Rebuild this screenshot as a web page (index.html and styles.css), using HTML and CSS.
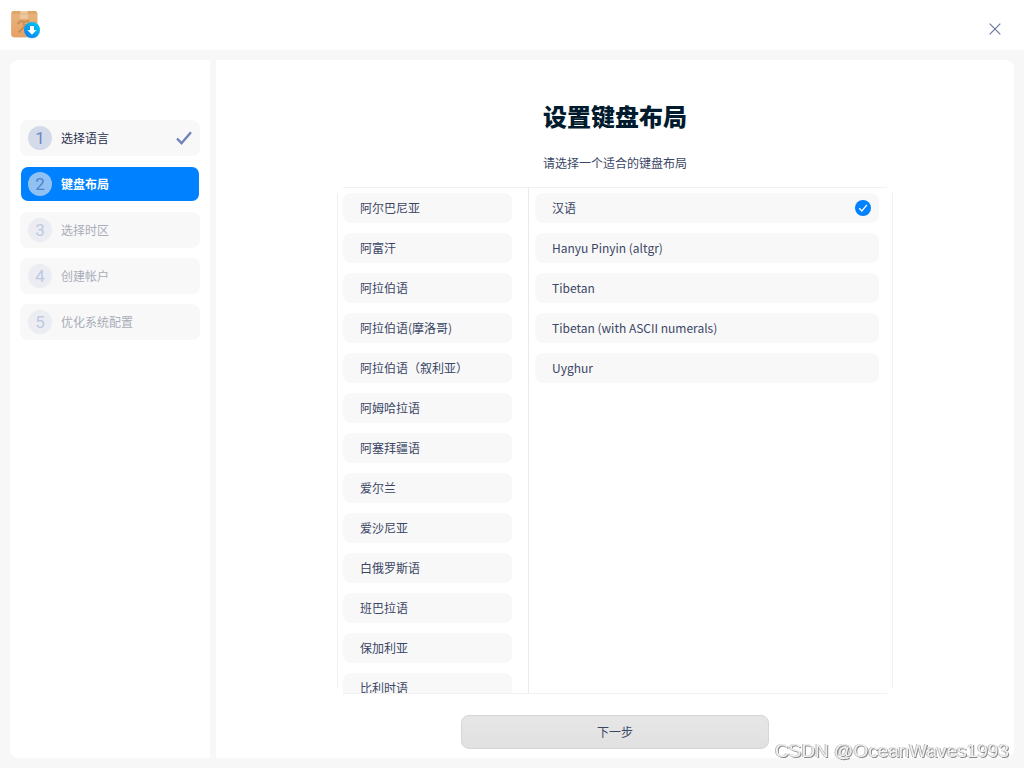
FILE: index.html
```html
<!DOCTYPE html>
<html lang="zh-CN">
<head>
  <meta charset="UTF-8" />
  <meta name="viewport" content="width=device-width, initial-scale=1.0"/>
  <title>设置键盘布局</title>
  <link rel="stylesheet" href="styles.css">
</head>
<body>

  <!-- Title bar -->
  <header class="titlebar">
    <svg class="app-icon" viewBox="0 0 30 30" aria-hidden="true">
      <defs>
        <linearGradient id="box" x1="0" y1="0" x2="0" y2="1">
          <stop offset="0" stop-color="#e6b57f"/>
          <stop offset="1" stop-color="#e8a165"/>
        </linearGradient>
        <linearGradient id="badge" x1="1" y1="0" x2="0" y2="1">
          <stop offset="0" stop-color="#00d0f0"/>
          <stop offset="1" stop-color="#0a78f5"/>
        </linearGradient>
      </defs>
      <rect x="0.3" y="1.6" width="26" height="26" rx="3" fill="#d9b595"/>
      <rect x="0.3" y="1" width="26" height="26" rx="3" fill="url(#box)"/>
      <path d="M3.3 1h20a3 3 0 0 1 2.9 2.8H0.4A3 3 0 0 1 3.3 1z" fill="#dda566"/>
      <path d="M9.5 1h7l.6 7.8H9z" fill="#ecc8a3"/>
      <path d="M9.3 4h7.5" stroke="#e0b183" stroke-width="1"/>
      <path d="M6.5 14l3-3 4 .5-1 2.5L19 23M7.5 22.5l8-8M15 12l3-1.500M18 15l2-2.500" fill="none" stroke="#c88f58" stroke-width="2"/>
      <circle cx="21.2" cy="20.8" r="8" fill="#9cb8ca" opacity="0.4"/>
      <circle cx="21" cy="20" r="8" fill="url(#badge)"/>
      <path d="M19 16h4v4h2.600l-4.600 4.700-4.600-4.700H19z" fill="#fff"/>
    </svg>
    <button type="button" class="close" aria-label="关闭">
      <svg viewBox="0 0 12 12"><path d="M0.7 0.7l10.6 10.6M11.3 0.7L0.7 11.3"/></svg>
    </button>
  </header>

  <div class="layout">
    <!-- Steps -->
    <aside class="sidebar">
      <ol class="steps">
        <li class="step done">
          <span class="num">1</span>选择语言
          <svg class="tick" viewBox="0 0 16 14"><path d="M1 7.5l4.5 4.700L15 1.200"/></svg>
        </li>
        <li class="step active" aria-current="step"><span class="num">2</span>键盘布局</li>
        <li class="step"><span class="num">3</span>选择时区</li>
        <li class="step"><span class="num">4</span>创建帐户</li>
        <li class="step"><span class="num">5</span>优化系统配置</li>
      </ol>
    </aside>

    <!-- Keyboard layout page -->
    <main class="content">
      <h1>设置键盘布局</h1>
      <p class="hint">请选择一个适合的键盘布局</p>

      <div class="picker">
        <div class="list languages">
          <button type="button" class="item">阿尔巴尼亚</button>
          <button type="button" class="item">阿富汗</button>
          <button type="button" class="item">阿拉伯语</button>
          <button type="button" class="item">阿拉伯语(摩洛哥)</button>
          <button type="button" class="item">阿拉伯语（叙利亚）</button>
          <button type="button" class="item">阿姆哈拉语</button>
          <button type="button" class="item">阿塞拜疆语</button>
          <button type="button" class="item">爱尔兰</button>
          <button type="button" class="item">爱沙尼亚</button>
          <button type="button" class="item">白俄罗斯语</button>
          <button type="button" class="item">班巴拉语</button>
          <button type="button" class="item">保加利亚</button>
          <button type="button" class="item">比利时语</button>
        </div>
        <div class="list variants">
          <button type="button" class="item" aria-pressed="true">
            汉语
            <svg class="selected" viewBox="0 0 16 16">
              <circle cx="8" cy="8" r="8"/>
              <path d="M4.2 8.2l2.7 2.8 5-6.2"/>
            </svg>
          </button>
          <button type="button" class="item">Hanyu Pinyin (altgr)</button>
          <button type="button" class="item">Tibetan</button>
          <button type="button" class="item">Tibetan (with ASCII numerals)</button>
          <button type="button" class="item">Uyghur</button>
        </div>
      </div>

      <button type="button" class="next">下一步</button>
    </main>
  </div>

  <div class="watermark">CSDN @OceanWaves1993</div>

</body>
</html>
```
FILE: styles.css
```css
* {
  box-sizing: border-box;
}

body {
  margin: 0;
  height: 100vh;
  display: flex;
  flex-direction: column;
  font-family: "Noto Sans CJK SC", sans-serif;
  font-size: 12px;
  line-height: 16px;
  background-color: #f7f7f7;
  color: #3b4665;
}

button {
  font: inherit;
  color: inherit;
  border: none;
  cursor: pointer;
}

.titlebar {
  flex: none;
  height: 50px;
  padding: 10px 17px 10px 11px;
  display: flex;
  justify-content: space-between;
  align-items: flex-start;
  background-color: #fff;
}

.app-icon {
  width: 30px;
  height: 30px;
}

.close {
  display: flex;
  padding: 6px;
  margin-top: 7px;
  background: none;
}

.close svg {
  width: 12px;
  height: 12px;
  fill: none;
  stroke: #6a7799;
  stroke-width: 1.2;
}

.layout {
  flex: 1;
  min-height: 0;
  display: flex;
  gap: 6px;
  padding: 10px;
}

.sidebar,
.content {
  background-color: #fff;
}

.sidebar {
  flex: none;
  width: 200px;
  padding: 60px 10px;
  border-radius: 8px 0 0 8px;
}

.steps {
  margin: 0;
  padding: 0;
  list-style: none;
  display: flex;
  flex-direction: column;
  gap: 10px;
}

.step {
  display: flex;
  align-items: center;
  gap: 9px;
  height: 36px;
  padding: 0 7px;
  border: 1px solid transparent;
  border-radius: 8px;
  background-color: #f8f8f8;
  color: #a9adb9;
}

.num {
  width: 24px;
  height: 24px;
  border-radius: 50%;
  background-color: #ebedf3;
  color: #c0c9e1;
  font-family: Roboto, sans-serif;
  font-size: 17px;
  font-weight: 400;
  line-height: 25px;
  text-align: center;
}

.step.done {
  color: #2a3150;
}

.step.done .num {
  background-color: #d3dbea;
  color: #6f87bb;
}

.tick {
  width: 16px;
  height: 14px;
  margin-left: auto;
  fill: none;
  stroke: #6f83b8;
  stroke-width: 2.4;
}

.step.active {
  background-color: #0081ff;
  background-clip: padding-box;
  color: #fff;
  font-weight: bold;
}

.step.active .num {
  background-color: #91c0f3;
  color: #4a85cf;
}

.content {
  flex: 1;
  min-width: 0;
  display: flex;
  flex-direction: column;
  align-items: center;
  padding: 40px 20px 9px;
  border-radius: 0 8px 8px 0;
}

h1 {
  margin: 0 0 22px;
  font-size: 24px;
  font-weight: 900;
  line-height: 32px;
  color: #001a2e;
}

.hint {
  margin: 0 0 15px;
  line-height: 18px;
}

/* frame lines stop short of the corners */
.picker {
  flex: 1;
  min-height: 0;
  width: 100%;
  max-width: 556px;
  padding-bottom: 1px;
  display: grid;
  grid-template-columns: 192px 1fr;
  grid-template-rows: minmax(0, 1fr);
  background-image:
    linear-gradient(#f1f1f1, #f1f1f1),
    linear-gradient(#f1f1f1, #f1f1f1),
    linear-gradient(#f1f1f1, #f1f1f1),
    linear-gradient(#f1f1f1, #f1f1f1);
  background-repeat: no-repeat;
  background-position: top, bottom, left, right;
  background-size:
    calc(100% - 12px) 1px,
    calc(100% - 12px) 1px,
    1px calc(100% - 12px),
    1px calc(100% - 12px);
}

.list {
  display: flex;
  flex-direction: column;
  gap: 10px;
  overflow: hidden;
}

.languages {
  padding: 6px 16px 0 6px;
  border-right: 1px solid #ebebeb;
}

.variants {
  padding: 6px 14px 0 6px;
}

.item {
  flex: none;
  display: flex;
  align-items: center;
  justify-content: space-between;
  height: 30px;
  padding: 0 8px 0 17px;
  border-radius: 8px;
  background-color: #f8f8f8;
  text-align: left;
}

.selected {
  width: 16px;
  height: 16px;
  fill: #0081ff;
}

.selected path {
  fill: none;
  stroke: #fff;
  stroke-width: 1.3;
}

.next {
  flex: none;
  width: 308px;
  height: 34px;
  margin-top: 21px;
  border: 1px solid #d6d6d6;
  border-radius: 8px;
  background-image: linear-gradient(#e6e6e6, #e1e1e1);
}

.watermark {
  position: fixed;
  right: 15px;
  bottom: 6px;
  font-family: "Liberation Sans", sans-serif;
  font-size: 19px;
  line-height: 22px;
  color: #f0f0f0;
  text-shadow: 1px 1px 0 #8a8a8a, -1px 0 0 #bdbdbd;
}
```
